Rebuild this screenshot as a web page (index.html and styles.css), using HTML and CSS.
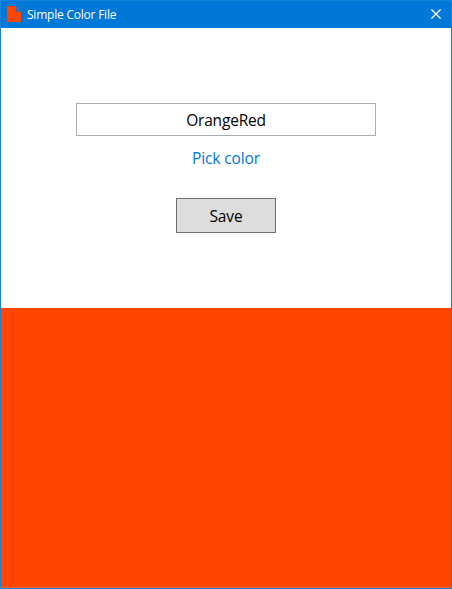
FILE: index.html
```html
<!DOCTYPE html>
<html lang="en">
<head>
<meta charset="utf-8">
<title>Simple Color File</title>
<link rel="stylesheet" href="styles.css">
</head>
<body>
<div class="window">
  <header class="titlebar">
    <svg class="file-icon" width="14" height="16" viewBox="0 0 14 16"><path fill="#ff4500" d="M0 0H8.500V5.500H14V16H0Z"/><path fill="#6c6292" d="M9.500 0L14 4.500H9.500Z"/></svg>
    <h1 class="title">Simple Color File</h1>
    <svg class="close" width="10" height="10" viewBox="0 0 10 10"><path d="M.4 .4L9.600 9.600M9.600 .4L.4 9.600" stroke="#fff" stroke-width="1.300"/></svg>
  </header>
  <main class="form">
    <input class="color-name" type="text" value="OrangeRed">
    <a class="pick">Pick color</a>
    <button class="save">Save</button>
  </main>
  <div class="preview"></div>
</div>
</body>
</html>
```
FILE: styles.css
```css
* { box-sizing: border-box; }
body { margin: 0; font-family: "Open Sans", "Noto Sans", sans-serif; }
.window {
  width: 452px;
  height: 589px;
  display: flex;
  flex-direction: column;
  border: 1px solid #1883d7;
  background: #fff;
}
.titlebar {
  height: 27px;
  flex: none;
  display: flex;
  align-items: center;
  padding: 0 10px 1px 6px;
  background: #0078d7;
}
.title {
  flex: 1;
  margin: 1px 0 0 6px;
  color: #fff;
  font-size: 12px;
  font-weight: 400;
  line-height: 17px;
  letter-spacing: -0.22px;
}
.form {
  height: 280px;
  flex: none;
  display: flex;
  flex-direction: column;
  align-items: center;
  padding-top: 75px;
  font-size: 15.5px;
}
.color-name {
  width: 300px;
  height: 33px;
  padding: 1px 0 0;
  border: 1px solid #abadb3;
  background: #fff;
  color: #000;
  font: inherit;
  letter-spacing: -0.2px;
  text-align: center;
}
.pick {
  margin-top: 10px;
  line-height: 24px;
  color: #0078d7;
  letter-spacing: -0.1px;
}
.save {
  width: 100px;
  height: 35px;
  margin-top: 28px;
  padding: 1px 0 0;
  border: 1px solid #707070;
  background: #ddd;
  color: #000;
  font: inherit;
  letter-spacing: -0.1px;
}
.preview {
  flex: 1;
  background: #ff4500;
  border-bottom: 1px solid #f16736;
}
```
